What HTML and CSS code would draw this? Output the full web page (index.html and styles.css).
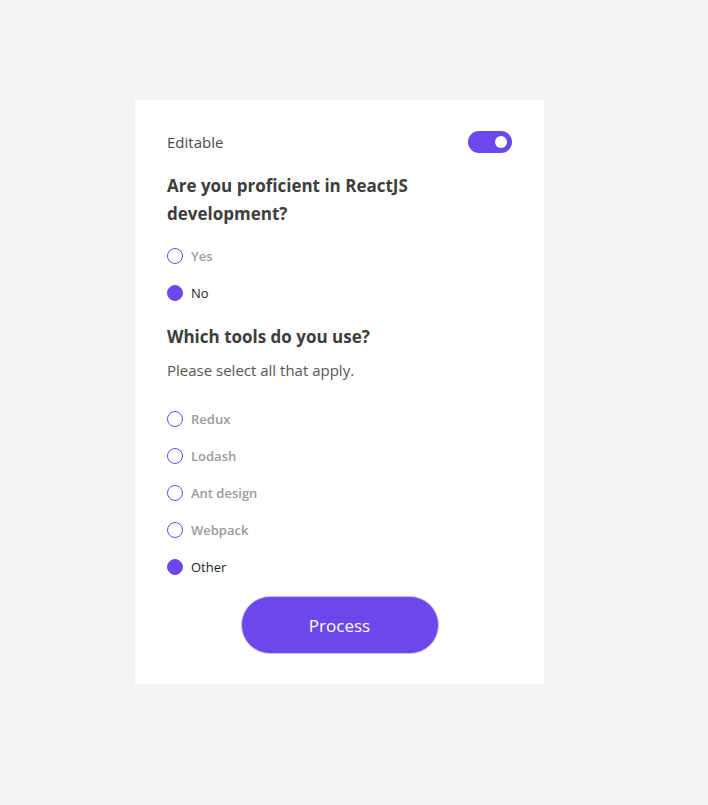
FILE: index.html
```html
<!DOCTYPE html>
<html lang="en">
<head>
<meta charset="utf-8">
<link rel="stylesheet" href="styles.css">
</head>
<body>
<div class="card">
  <div class="top-row">
    <span class="editable">Editable</span>
    <span class="toggle"><span class="knob"></span></span>
  </div>
  <h2 class="question q1">Are you proficient in ReactJS development?</h2>
  <div class="options">
    <label class="opt"><span class="radio"></span><span class="lbl">Yes</span></label>
    <label class="opt checked"><span class="radio"></span><span class="lbl">No</span></label>
  </div>
  <h2 class="question q2">Which tools do you use?</h2>
  <p class="hint">Please select all that apply.</p>
  <div class="options tools">
    <label class="opt"><span class="radio"></span><span class="lbl">Redux</span></label>
    <label class="opt"><span class="radio"></span><span class="lbl">Lodash</span></label>
    <label class="opt"><span class="radio"></span><span class="lbl">Ant design</span></label>
    <label class="opt"><span class="radio"></span><span class="lbl">Webpack</span></label>
    <label class="opt checked"><span class="radio"></span><span class="lbl">Other</span></label>
  </div>
  <div class="actions"><button class="btn">Process</button></div>
</div>
</body>
</html>
```
FILE: styles.css
```css
* { box-sizing: border-box; }
html, body { margin: 0; }
body {
  background: #f4f4f4;
  padding: 100px 0 0 135px;
  font-family: "Open Sans", "Noto Sans", sans-serif;
  min-height: 805px;
}
.card {
  width: 409px;
  background: #fff;
  padding: 31px 32px 30px 32px;
  display: flex;
  flex-direction: column;
}
.top-row {
  display: flex;
  justify-content: space-between;
  align-items: center;
  height: 22px;
}
.editable {
  font-size: 15px;
  color: #4a4a4a;
}
.toggle {
  width: 44px;
  height: 22px;
  border-radius: 11px;
  background: #6c47eb;
  position: relative;
}
.knob {
  position: absolute;
  right: 5px;
  top: 5px;
  width: 12px;
  height: 12px;
  border-radius: 50%;
  background: #fff;
}
.question {
  margin: 0;
  font-size: 17px;
  font-weight: 700;
  line-height: 28px;
  color: #3d3d3d;
}
.q1 { margin-top: 19px; }
.q2 { margin-top: 19px; }
.options {
  display: flex;
  flex-direction: column;
  gap: 15px;
  margin-top: 17px;
}
.options.tools { margin-top: 27px; }
.opt {
  display: flex;
  align-items: center;
  height: 22px;
  gap: 8px;
}
.radio {
  width: 16px;
  height: 16px;
  border-radius: 50%;
  border: 1px solid #6c47eb;
}
.opt.checked .radio { background: #6c47eb; }
.lbl {
  font-size: 13px;
  font-weight: 600;
  color: #9a9a9a;
}
.opt.checked .lbl { color: #222; font-weight: 500; }
.hint {
  margin: 8px 0 0;
  font-size: 15px;
  line-height: 22px;
  color: #555;
}
.actions {
  display: flex;
  justify-content: center;
  margin-top: 18px;
}
.btn {
  width: 198px;
  height: 58px;
  border-radius: 29px;
  background: #6c47eb;
  border: 1px solid #c9c0ea;
  color: #fff;
  font-family: inherit;
  font-size: 17px;
}
```
